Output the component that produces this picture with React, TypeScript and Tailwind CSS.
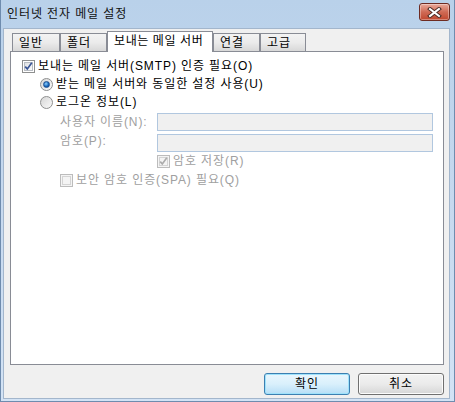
import React from "react";

function CheckBox({ checked, disabled }: { checked?: boolean; disabled?: boolean }) {
  return (
    <span
      className={
        "relative shrink-0 w-[13px] h-[13px] border flex items-center justify-center " +
        (disabled ? "border-[#bcbcbc] bg-[#f4f4f4]" : "border-[#8e8f8f] bg-white")
      }
    >
      <span
        className={
          "w-[9px] h-[9px] border " +
          (disabled
            ? "border-[#d4d4d4] bg-[#f4f4f4]"
            : "border-[#b8bcc2] bg-linear-to-br from-[#dfe1e3] to-[#fbfbfb]")
        }
      />
      {checked && (
        <svg className="absolute left-0 top-0" width="11" height="11" viewBox="0 0 11 11">
          <path
            d="M2.2 5.6 L4.3 7.9 L8.8 1.8"
            fill="none"
            stroke={disabled ? "#acacac" : "#3a5595"}
            strokeWidth="1.7"
          />
        </svg>
      )}
    </span>
  );
}

function Radio({ checked }: { checked?: boolean }) {
  return (
    <span className="shrink-0 w-[13px] h-[13px] rounded-full border border-[#8e8f8f] bg-linear-to-br from-[#d6d6d6] to-[#fafafa] flex items-center justify-center">
      {checked && (
        <span className="w-[7px] h-[7px] rounded-full bg-[radial-gradient(circle_at_40%_35%,#8fd0ff,#1464b8_60%,#0b3d85)] border border-[#1c4f91]" />
      )}
    </span>
  );
}

function Tab({ label, width, selected }: { label: string; width: string; selected?: boolean }) {
  if (selected) {
    return (
      <div
        className={
          width +
          " relative z-10 h-[21px] -mb-px border border-b-0 border-[#898c95] bg-white pl-[6px] pt-[2px] leading-[14px] tracking-[0.6px]"
        }
      >
        {label}
      </div>
    );
  }
  return (
    <div
      className={
        width +
        " h-[18px] border border-b-0 border-[#898c95] bg-linear-to-b from-[#f3f3f3] via-[#ebebeb] to-[#d8d8d8] pl-[6px] pt-[2px] leading-[14px]"
      }
    >
      {label}
    </div>
  );
}

export default function App() {
  return (
    <div className="w-[455px] h-[402px] flex flex-col bg-linear-to-b from-[#b9d1ea] via-[#c6d9ef] to-[#d3e3f5] border-l border-r border-b border-[#6f8cae] font-['Liberation_Sans','Noto_Sans_CJK_KR',sans-serif] text-[12px] tracking-[0.9px] text-black overflow-hidden">
      {/* title bar */}
      <div className="h-[28px] shrink-0 flex items-center justify-between pl-[6px] pr-[4px]">
        <span className="leading-[14px] text-[#101010]">인터넷 전자 메일 설정</span>
        <button className="w-[31px] h-[18px] -mt-[4px] rounded-[3px] border border-[#6e2b22] bg-linear-to-b from-[#e9a99b] via-[#cf6a55] to-[#c0462d] flex items-center justify-center shadow-[inset_0_0_0_1px_rgba(255,255,255,0.35)]">
          <svg width="15" height="11" viewBox="0 0 15 11">
            <path d="M3 2 L12 9 M12 2 L3 9" stroke="#4a2a24" strokeWidth="4" strokeLinecap="square" />
            <path d="M3 2 L12 9 M12 2 L3 9" stroke="#ffffff" strokeWidth="2" strokeLinecap="square" />
          </svg>
        </button>
      </div>

      {/* client area */}
      <div className="flex-1 ml-[2px] mr-[4px] mb-[2px] flex flex-col bg-[#f0f0f0] border border-[#a3b6cc] pl-[6px] pr-[5px]">
        <div className="pt-[2px] h-[22px] shrink-0 flex items-end pl-[2px]">
          <Tab label="일반" width="w-[48px]" />
          <Tab label="폴더" width="w-[47px]" />
          <Tab label="보내는 메일 서버" width="w-[106px]" selected />
          <Tab label="연결" width="w-[47px]" />
          <Tab label="고급" width="w-[46px]" />
        </div>

        <div className="flex-1 border border-[#898c95] bg-white flex flex-col pl-[11px] pt-[5px] pr-[10px] leading-[14px]">
          <div className="h-[18px] flex items-center gap-[3px]">
            <CheckBox checked />
            <span>보내는 메일 서버(SMTP) 인증 필요(O)</span>
          </div>
          <div className="h-[18px] flex items-center gap-[3px] pl-[18px]">
            <Radio checked />
            <span>받는 메일 서버와 동일한 설정 사용(U)</span>
          </div>
          <div className="h-[18px] flex items-center gap-[3px] pl-[18px]">
            <Radio />
            <span>로그온 정보(L)</span>
          </div>
          <div className="mt-[2px] h-[18px] flex items-center pl-[38px] text-[#a0a0a0]">
            <span className="w-[97px] -mt-[1px]">사용자 이름(N):</span>
            <div className="flex-1 h-full border border-[#b1c7df] bg-[#f0f0f0]" />
          </div>
          <div className="mt-[3px] h-[18px] flex items-center pl-[38px] text-[#a0a0a0]">
            <span className="w-[97px] -mt-[4px]">암호(P):</span>
            <div className="flex-1 h-full border border-[#b1c7df] bg-[#f0f0f0]" />
          </div>
          <div className="h-[18px] flex items-center gap-[3px] pl-[135px] text-[#a0a0a0]">
            <CheckBox checked disabled />
            <span>암호 저장(R)</span>
          </div>
          <div className="mt-[1px] h-[18px] flex items-center gap-[3px] pl-[38px] text-[#a0a0a0]">
            <CheckBox disabled />
            <span>보안 암호 인증(SPA) 필요(Q)</span>
          </div>
        </div>

        <div className="shrink-0 pt-[8px] pb-[3px] flex justify-end gap-[8px]">
          <button className="w-[86px] h-[22px] rounded-[3px] border border-[#3c7fb1] bg-linear-to-b from-[#eaf6fd] via-[#d9f0fc] to-[#b6def6] shadow-[inset_0_0_0_1px_#9fe2fb] leading-[14px]">
            확인
          </button>
          <button className="w-[86px] h-[22px] rounded-[3px] border border-[#707070] bg-linear-to-b from-[#f2f2f2] via-[#ebebeb] to-[#d6d6d6] shadow-[inset_0_0_0_1px_#fcfcfc] leading-[14px]">
            취소
          </button>
        </div>
      </div>
    </div>
  );
}
